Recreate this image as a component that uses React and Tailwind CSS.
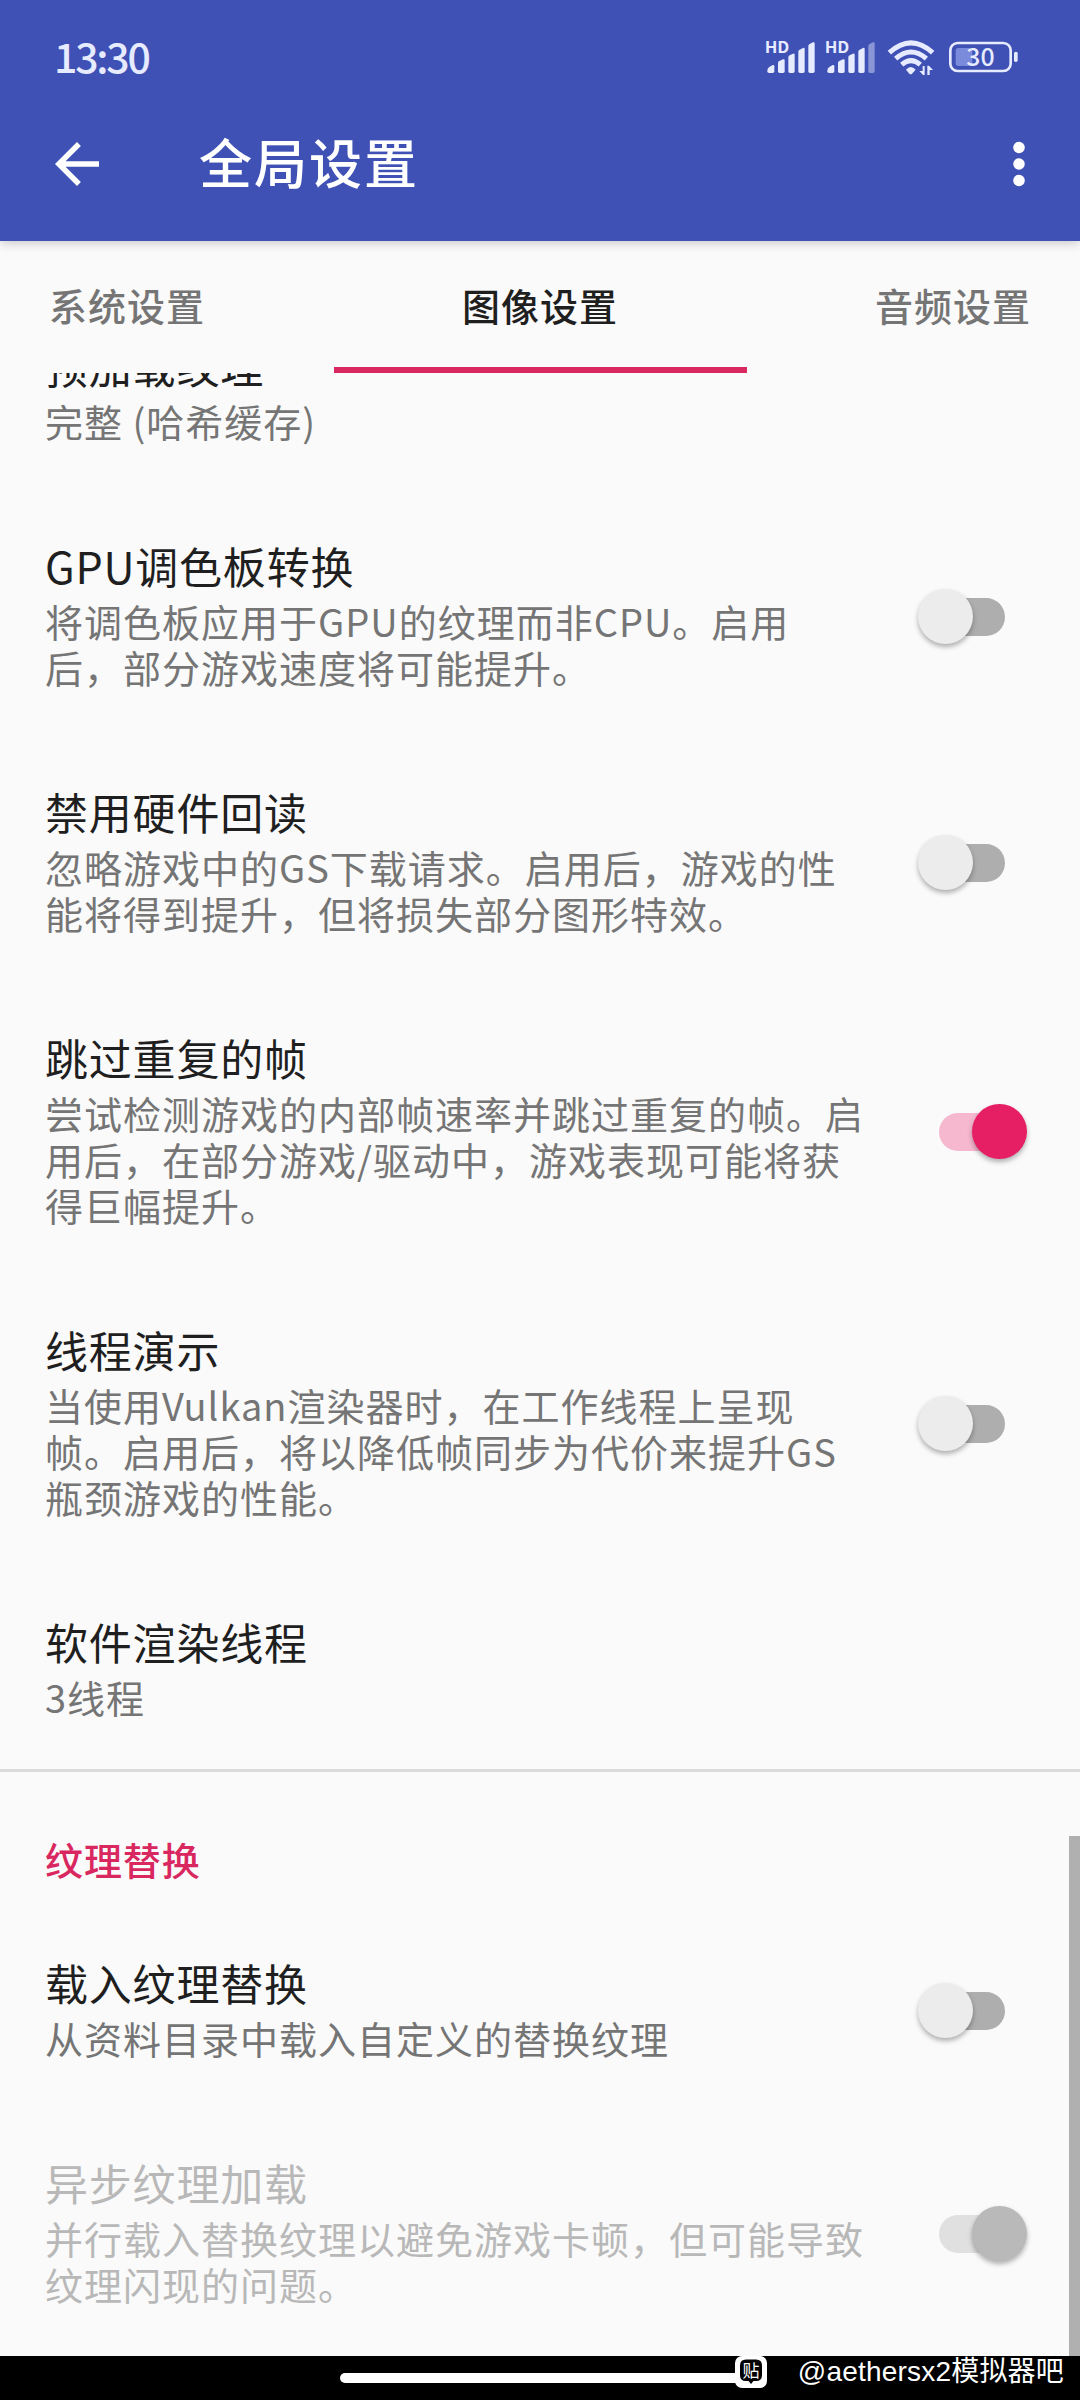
const tabs = [
  { label: "系统设置", active: false },
  { label: "图像设置", active: true },
  { label: "音频设置", active: false },
];

const settings = [
  { title: "预加载纹理", lines: ["完整 (哈希缓存)"] },
  {
    title: "GPU调色板转换",
    lines: ["将调色板应用于GPU的纹理而非CPU。启用", "后，部分游戏速度将可能提升。"],
    toggle: "off",
  },
  {
    title: "禁用硬件回读",
    lines: ["忽略游戏中的GS下载请求。启用后，游戏的性", "能将得到提升，但将损失部分图形特效。"],
    toggle: "off",
  },
  {
    title: "跳过重复的帧",
    lines: [
      "尝试检测游戏的内部帧速率并跳过重复的帧。启",
      "用后，在部分游戏/驱动中，游戏表现可能将获",
      "得巨幅提升。",
    ],
    toggle: "on",
  },
  {
    title: "线程演示",
    lines: [
      "当使用Vulkan渲染器时，在工作线程上呈现",
      "帧。启用后，将以降低帧同步为代价来提升GS",
      "瓶颈游戏的性能。",
    ],
    toggle: "off",
  },
  { title: "软件渲染线程", lines: ["3线程"] },
];

const textureSettings = [
  { title: "载入纹理替换", lines: ["从资料目录中载入自定义的替换纹理"], toggle: "off" },
  {
    title: "异步纹理加载",
    lines: ["并行载入替换纹理以避免游戏卡顿，但可能导致", "纹理闪现的问题。"],
    toggle: "disabled",
  },
];

const trackColors = {
  off: "bg-[#aeaeae]",
  on: "bg-[#f6b8cf]",
  disabled: "bg-[#e0e0e0]",
};

const thumbColors = {
  off: "bg-[#ececec] -left-[21px]",
  on: "bg-[#e61e63] left-[33px]",
  disabled: "bg-[#b9b9b9] left-[33px]",
};

function Switch({ state }) {
  return (
    <div className={`relative mt-[7px] h-[38px] w-[66px] rounded-full ${trackColors[state]}`}>
      <span
        className={`absolute -top-[9px] size-[55px] rounded-full shadow-[0_3px_5px_rgba(0,0,0,0.3)] ${thumbColors[state]}`}
      />
    </div>
  );
}

function Setting({ title, lines, toggle }) {
  const disabled = toggle === "disabled";
  return (
    <div className="flex items-center justify-between pl-[45px] pr-[75px]">
      <div className="pt-[45px] pb-[46px] whitespace-nowrap">
        <h3 className={`h-[60px] text-[43px] leading-[60px] tracking-[0.8px] ${disabled ? "text-[#b8b8b8]" : "text-[#1f1f1f]"}`}>
          {title}
        </h3>
        <div className={`mt-[3px] text-[38px] leading-[46px] tracking-[1px] ${disabled ? "text-[#b8b8b8]" : "text-[#757575]"}`}>
          {lines.map((line) => (
            <p key={line}>{line}</p>
          ))}
        </div>
      </div>
      {toggle && <Switch state={toggle} />}
    </div>
  );
}

function StatusIcons() {
  return (
    <svg width="256" height="36" viewBox="72 60 768 108" fill="#e6ebff">
      {/* Signal bars, one set per SIM */}
      {[0, 180].map((x) => (
        <g key={x} transform={`translate(${x} 0)`}>
          <text x="74" y="98" fontSize="48" fontWeight="700" textLength="74" lengthAdjust="spacingAndGlyphs">HD</text>
          <path d="M82 152 Q82 145 88 141 L98 135 Q103 134 103 139 V154 Q103 159 98 159 H87 Q82 159 82 154Z" />
          <path d="M114 129 Q114 125 118 123 L129 118 Q134 116 134 121 V154 Q134 159 129 159 H119 Q114 159 114 154Z" />
          <path d="M145 112 Q145 108 149 106 L159 101 Q164 99 164 104 V154 Q164 159 159 159 H150 Q145 159 145 154Z" />
          <path d="M175 95 Q175 91 179 89 L189 84 Q194 82 194 87 V154 Q194 159 189 159 H180 Q175 159 175 154Z" />
          <path
            d="M205 78 Q205 74 209 72 L219 67 Q224 65 224 70 V154 Q224 159 219 159 H210 Q205 159 205 154Z"
            opacity={x ? 0.45 : 1}
          />
        </g>
      ))}
      {/* Wifi */}
      <g fill="none" stroke="#e6ebff" strokeWidth="15">
        <path d="M448 98 Q513 39 578 98" />
        <path d="M467 116 Q513 76 559 116" />
        <path d="M485 134 Q513 110 541 134" />
      </g>
      <path d="M498 149 Q512 133 527 149 L516 161 Q512 165 508 161Z" />
      <path d="M548 138 H554 V165 H549 L538 153 H548Z M562 165 V137 H567 L579 150 H569 V165Z" />
      {/* Battery */}
      <rect x="647" y="84" width="50" height="54" rx="8" fill="#7b8bdc" />
      <rect x="631" y="69" width="181" height="84" rx="22" fill="none" stroke="#e6ebff" strokeWidth="8" />
      <rect x="822" y="95" width="11" height="31" rx="5" />
      <text x="679" y="138" fontSize="75" fontWeight="500" textLength="85" lengthAdjust="spacingAndGlyphs">30</text>
    </svg>
  );
}

export default function App() {
  return (
    <div className="flex h-[2400px] w-[1080px] flex-col overflow-hidden bg-[#fafafa] font-['Noto_Sans_CJK_SC',sans-serif]">
      {/* App bar */}
      <header className="relative z-10 h-[241px] shrink-0 bg-[#3f51b5] text-white shadow-[0_2px_10px_rgba(0,0,0,0.2)]">
        <div className="flex h-[116px] items-center justify-between pl-[54px] pr-[60px]">
          <span className="pb-[6px] text-[41px] font-medium leading-none tracking-[-2.2px] text-[#e6ebff]">13:30</span>
          <StatusIcons />
        </div>
        <div className="flex h-[96px] items-center pl-[44px] pr-[28px]">
          <svg width="66" height="66" viewBox="0 0 24 24" fill="currentColor">
            <path d="M20 11H7.83l5.59-5.59L12 4l-8 8 8 8 1.41-1.41L7.83 13H20v-2z" />
          </svg>
          <h1 className="ml-[89px] pb-[5px] text-[53px] font-medium leading-none tracking-[2px]">全局设置</h1>
          <svg className="ml-auto" width="66" height="66" viewBox="0 0 24 24" fill="currentColor">
            <circle cx="12" cy="6" r="2.1" />
            <circle cx="12" cy="12" r="2.1" />
            <circle cx="12" cy="18" r="2.1" />
          </svg>
        </div>
      </header>

      {/* Tabs */}
      <nav className="flex h-[132px] shrink-0 justify-between px-[49px]">
        {tabs.map(({ label, active }) => (
          <div
            key={label}
            className={`flex h-full justify-center text-[38px] font-medium leading-[127px] tracking-[1px] ${
              active ? "w-[413px] border-b-[6px] border-[#d9275f] text-[#1f1f1f]" : "w-[156px] text-[#757575]"
            }`}
          >
            {label}
          </div>
        ))}
      </nav>

      {/* Settings list, scrolled part way down */}
      <main className="relative min-h-0 flex-1 overflow-hidden">
        <div className="-mt-[83px]">
          {settings.map((item) => (
            <Setting key={item.title} {...item} />
          ))}
          <h2 className="mt-[3px] h-[138px] border-t-[3px] border-[#dadcdb] pl-[45px] pt-[57px] text-[38px] font-medium leading-[60px] tracking-[0.9px] text-[#d9275f]">
            纹理替换
          </h2>
          {textureSettings.map((item) => (
            <Setting key={item.title} {...item} />
          ))}
        </div>
        <div className="absolute bottom-0 right-0 h-[520px] w-[11px] bg-[#b0b0b0]" />
      </main>

      {/* Navigation bar */}
      <footer className="relative flex h-[44px] shrink-0 justify-center bg-black pt-[17px]">
        <div className="h-[10px] w-[400px] rounded-full bg-white" />
        <div className="absolute right-[16px] top-0 flex h-[32px] items-center gap-[31px] text-white">
          <svg width="32" height="32" viewBox="0 0 32 32">
            <rect width="32" height="32" rx="7" fill="#fff" />
            <path d="M11 3.5H21Q27 3.5 27 9.5V19Q27 25 21 25H18.5L16 28L13.5 25H11Q5 25 5 19V9.5Q5 3.5 11 3.5Z" fill="#000" />
            <text x="16" y="20.5" fontSize="17" textAnchor="middle" fill="#fff">贴</text>
          </svg>
          <span className="font-['Liberation_Sans','Noto_Sans_CJK_SC',sans-serif] text-[28px] leading-[32px] tracking-[0.2px]">
            @aethersx2模拟器吧
          </span>
        </div>
      </footer>
    </div>
  );
}
